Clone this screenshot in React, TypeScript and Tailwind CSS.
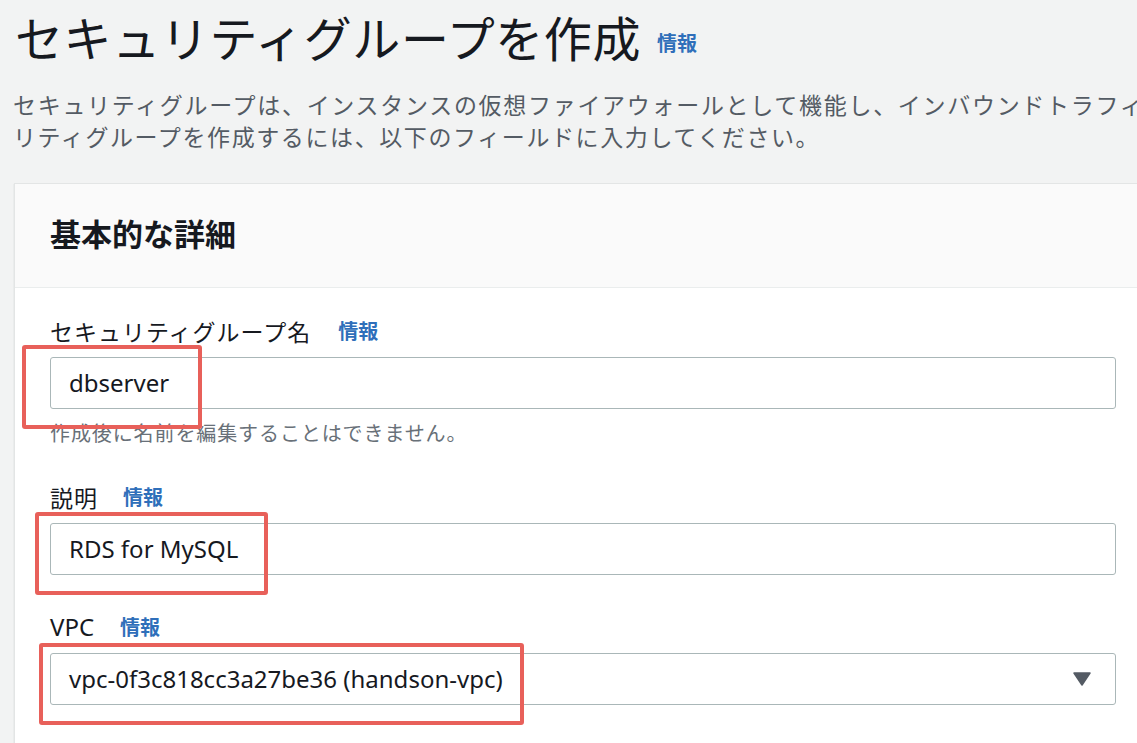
import React from "react";

const jp = "font-['Noto_Sans_CJK_JP','Noto_Sans',sans-serif]";
const latin = "font-['Noto_Sans','Noto_Sans_CJK_JP',sans-serif]";

function Info({ className = "" }: { className?: string }) {
  return (
    <span className={`font-bold text-[#2f6fba] tracking-normal ${className}`}>情報</span>
  );
}

function Field({
  label,
  value,
  select,
  gap,
  latinLabel,
}: {
  label: string;
  value: string;
  select?: boolean;
  gap: string;
  latinLabel?: boolean;
}) {
  return (
    <div>
      <div className="flex items-center h-[28px] text-[#16191f]">
        <span className={latinLabel ? `${latin} text-[24px]` : "text-[23px] tracking-[1px]"}>{label}</span>
        <Info className={`text-[20px] ${jp} ${gap}`} />
      </div>
      <div className="mt-[12px] h-[52px] w-[1066px] flex items-center justify-between rounded-[3px] border border-[#aab7b8] bg-white pl-[18px] pr-[24px]">
        <span className={`${latin} text-[24px] text-[#16191f]`}>{value}</span>
        {select && (
          <svg width="18" height="14" viewBox="0 0 18 14">
            <path d="M1 1 H17 L9 13 Z" fill="#545b64" strokeLinejoin="round" stroke="#545b64" strokeWidth="1.5" />
          </svg>
        )}
      </div>
    </div>
  );
}

export default function App() {
  const redBoxes = [
    { id: 1, cls: "left-[22px] top-[345px] w-[180px] h-[84px]" },
    { id: 2, cls: "left-[35px] top-[512px] w-[233px] h-[83px]" },
    { id: 3, cls: "left-[39px] top-[643px] w-[485px] h-[82px]" },
  ];

  return (
    <div className={`relative h-[743px] w-full overflow-hidden bg-[#f2f3f3] ${jp}`}>
      <div className="flex items-end pl-[15px] pt-[8px] h-[62px]">
        <h1 className="text-[48px] leading-[52px] tracking-[0.6px] font-normal text-[#16191f]">
          セキュリティグループを作成
        </h1>
        <Info className="ml-[16px] mb-[4px] text-[20px]" />
      </div>

      <div className="mt-[26px] pl-[13px] text-[23px] leading-[32px] text-[#545b64] whitespace-nowrap">
        <p className="tracking-[1.7px]">セキュリティグループは、インスタンスの仮想ファイアウォールとして機能し、インバウンドトラフィックとアウトバウンドトラフィックを制御します。新しいセキュ</p>
        <p className="tracking-[1.6px]">リティグループを作成するには、以下のフィールドに入力してください。</p>
      </div>

      <div className="ml-[14px] mt-[31px] w-[1200px] border-l border-t border-[#e3e5e5] bg-white shadow-[0_1px_1px_rgba(0,28,36,0.2)]">
        <div className="h-[104px] flex items-center pl-[35px] bg-[#fafafa] border-b border-[#eaeded]">
          <h2 className="text-[31px] font-bold text-[#16191f] mb-[4px]">基本的な詳細</h2>
        </div>
        <div className="pl-[35px] pt-[29px] pb-[80px]">
          <Field label="セキュリティグループ名" value="dbserver" gap="ml-[27px]" />
          <p className="mt-[12px] h-[24px] leading-[24px] text-[20px] tracking-[0.9px] text-[#687078]">
            作成後に名前を編集することはできません。
          </p>
          <div className="mt-[38px]">
            <Field label="説明" value="RDS for MySQL" gap="ml-[25px]" />
          </div>
          <div className="mt-[38px]">
            <Field label="VPC" value="vpc-0f3c818cc3a27be36 (handson-vpc)" select latinLabel gap="ml-[26px]" />
          </div>
        </div>
      </div>

      {redBoxes.map((b) => (
        <div
          key={b.id}
          className={`absolute rounded-[3px] border-[4px] border-[#e8605a] ${b.cls}`}
        />
      ))}
    </div>
  );
}
